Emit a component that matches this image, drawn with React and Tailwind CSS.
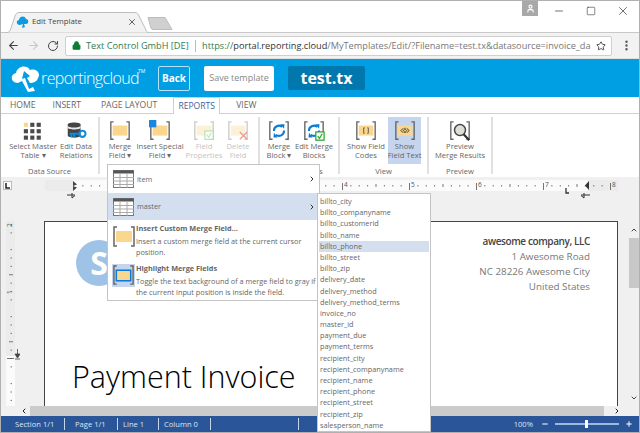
import React from "react";
import { ArrowLeft, ArrowRight, RotateCw, Lock, Star, EllipsisVertical, Minus, Square, X, ChevronLeft, ChevronRight, ChevronUp, ChevronDown, Plus, User } from "lucide-react";

const Brackets = ({ c = "#666", o = 1 }) => (
  <g opacity={o} fill="none" stroke={c} strokeWidth="1.5">
    <path d="M5 2H2V21H5" />
    <path d="M19 2H22V21H19" />
  </g>
);
const FieldIcon = ({ faded, children, fill = "#fbd78e" }) => (
  <svg width="24" height="24" viewBox="0 0 24 24">
    <Brackets c={faded ? "#ccc" : "#666"} />
    <rect x="4" y="6" width="16" height="11" fill={faded ? "#fdf0d8" : fill} />
    {children}
  </svg>
);
const GridIcon = () => (
  <svg width="24" height="24" viewBox="0 0 24 24">
    {[3, 10, 17].map((y) =>
      [2, 9, 16].map((x) => (
        <rect key={x + "-" + y} x={x} y={y} width="4.5" height="4.5" fill={x === 2 && y === 3 ? "#fbd78e" : "#4a4a4a"} />
      ))
    )}
  </svg>
);
const DbIcon = () => (
  <svg width="24" height="24" viewBox="0 0 24 24">
    <path d="M3 5C3 2 17 2 17 5V17C17 20 3 20 3 17Z" fill="#444" />
    <path d="M3 6C3 9 17 9 17 6V8.5C17 11 3 11 3 8.5Z" fill="#e8e8e8" />
    <circle cx="19" cy="15" r="3.4" fill="none" stroke="#0d8bdc" strokeWidth="2.2" />
    <path d="M15.5 15H5M7 15V18.5M10 15V18.5" fill="none" stroke="#0d8bdc" strokeWidth="2" />
  </svg>
);
const LoopIcon = ({ check }) => (
  <svg width="24" height="24" viewBox="0 0 24 24">
    <Brackets />
    <path d="M6.5 12A5.5 5.5 0 0 1 15.5 7.5M17.5 11.5A5.5 5.5 0 0 1 8.5 16" fill="none" stroke="#0a7bd6" strokeWidth="2.2" />
    <path d="M13.5 4.5L18 4.5L17.5 9.5Z M10.5 19L6 19L6.5 14Z" fill="#0a7bd6" />
    {check && (
      <g>
        <rect x="14" y="13" width="9" height="9" fill="#fff" stroke="#2eaa2e" strokeWidth="1.4" />
        <path d="M16 17.5L18 20L21 15" fill="none" stroke="#2eaa2e" strokeWidth="1.4" />
      </g>
    )}
  </svg>
);
const TableIcon = () => (
  <svg width="21" height="18" viewBox="0 0 21 18" className="shrink-0">
    <rect x="0.5" y="0.5" width="20" height="17" fill="#fff" stroke="#777" />
    <rect x="0.5" y="0.5" width="20" height="3" fill="#555" />
    <path d="M7 3V18M14 3V18M0 7.5H21M0 11H21M0 14.5H21" stroke="#aaa" fill="none" />
  </svg>
);

const RBtn = ({ w, top, bottom, faded, active, children }) => (
  <div
    className={`flex flex-col items-center shrink-0 pt-[3px] h-[47px] ${active ? "bg-[#c5d5ee]" : ""} ${faded ? "text-[#c4c4c4]" : "text-[#666]"}`}
    style={{ width: w }}
  >
    <div className="h-[22px] w-[22px] [&>svg]:w-[22px] [&>svg]:h-[22px]">{children}</div>
    <div className="leading-[8.5px] whitespace-nowrap text-center">{top}</div>
    <div className="leading-[8.5px] whitespace-nowrap text-center">{bottom}</div>
  </div>
);
const Group = ({ w, pl, label, children }) => (
  <div className="flex flex-col shrink-0 border-r-2 border-[#e0e0e0] h-[57px] mt-[3px]" style={{ width: w, paddingLeft: pl }}>
    <div className="flex h-[47px]">{children}</div>
    <div className="text-center text-[#666] leading-[10px] mt-[2px]" style={{ marginLeft: -pl }}>{label}</div>
  </div>
);

const rows = ["billto_city","billto_companyname","billto_customerid","billto_name","billto_phone","billto_street","billto_zip","delivery_date","delivery_method","delivery_method_terms","invoice_no","master_id","payment_due","payment_terms","recipient_city","recipient_companyname","recipient_name","recipient_phone","recipient_street","recipient_zip","salesperson_name"];

const HRuler = () => {
  const ticks = [];
  for (let i = 0; i < 68; i++) {
    const x = 29 + i * 8.375;
    if (i % 8 !== 0 && x < 572) ticks.push(<rect key={i} x={x} y={i % 4 === 0 ? 4 : 5} width={1} height={i % 4 === 0 ? 3 : 1.5} fill="#777" />);
  }
  const nums = [4, 5, 6, 7, 8];
  return (
    <svg width="573" height="24" viewBox="0 0 573 24" className="block">
      <rect x="0" y="0" width="573" height="11" fill="#fbfbfb" />
      <rect x="0" y="0" width="28" height="11" fill="#ebebeb" />
      <rect x="543" y="0" width="30" height="11" fill="#ebebeb" />
      {ticks}
      {nums.map((n) => (
        <g key={n}>
          <rect x={29 + n * 67} y="3" width="0.8" height="7" fill="#555" />
          <text x={31 + n * 67} y="7" fontSize="6.5" fill="#555">{n}</text>
        </g>
      ))}
      <path d="M28 1L32 4.5L28 6ZM28 6L32 7.5L28 11Z" fill="#444" />
      <path d="M22 15H30M27 13V18L30 15.5" stroke="#333" fill="none" />
      <path d="M544 1L540 5.5L544 10Z" fill="#333" />
      <path d="M521 8V13H524" stroke="#333" fill="none" strokeWidth="1.3" />
      <path d="M536 15H545M539 13V18L536 15.5" stroke="#333" fill="none" />
    </svg>
  );
};
const VRuler = () => {
  const ticks = [];
  for (let i = 0; i < 24; i++) {
    const y = 3 + i * 8.375;
    if (i % 8 !== 2) ticks.push(<rect key={i} x={i % 4 === 2 ? 7 : 8.5} y={y} width={i % 4 === 2 ? 4 : 1.5} height="1" fill="#777" />);
  }
  return (
    <svg width="18" height="185" viewBox="0 0 18 185" className="block">
      <rect x="4" y="0" width="9" height="135" fill="#ebebeb" />
      <rect x="4" y="135" width="9" height="50" fill="#fbfbfb" />
      {ticks}
      <text x="8" y="8" fontSize="6.5" fill="#555" transform="rotate(-90 8 6)">2</text>
      <text x="8" y="75" fontSize="6.5" fill="#555" transform="rotate(-90 8 73)">1</text>
      <rect x="5" y="137" width="7" height="0.8" fill="#555" />
      <path d="M13 133H18L15.5 137ZM15.5 128V133M13 138H18" stroke="#444" fill="#444" strokeWidth="0.8" />
    </svg>
  );
};

export default function App() {
  return (
    <div
      className="relative w-[640px] h-[433px] overflow-hidden flex flex-col bg-white border-x border-y border-[#b0b0b0] box-border"
      style={{ fontFamily: '"Open Sans","Noto Sans",sans-serif' }}
    >
      {/* title bar */}
      <div className="flex items-end h-[32px] shrink-0 pl-[4px] border-b border-[#c8c8c8] relative">
        <div className="relative w-[144px] h-[20px] flex items-center pl-[27px] pr-[12px] text-[7.8px] text-[#444]">
          <svg width="144" height="21" viewBox="0 0 144 21" className="absolute left-0 top-0">
            <path d="M0 20.5H2C4 20.5 5 19 6 16L10 4C11 1.5 12 .5 14 .5H130C132 .5 133 1.5 134 4L140 16C141 19 142 20.5 144 20.5" fill="#f2f2f2" stroke="#bdbdbd" />
          </svg>
          <svg width="13" height="13" viewBox="0 0 13 13" className="absolute left-[11px] top-[3px]">
            <path d="M4 10C0 10 0 5 3 5C3 1 9 0 10 4C13 4 13 9 10 9L8 9L9 12L6 13L7 9Z" fill="#0d9be0" />
          </svg>
          <span className="relative">Edit Template</span>
          <X size={10} strokeWidth={2} className="relative ml-auto text-[#444]" />
        </div>
        <svg width="26" height="13" viewBox="0 0 26 13" className="mb-[2px] -ml-[2px] shrink-0">
          <path d="M1 .5H18L25 12.5H6C5 12.5 4.5 12 4 11Z" fill="#d0d0d0" stroke="#bbb" />
        </svg>
        <div className="ml-auto flex items-start self-start">
          <div className="w-[16px] h-[15px] bg-[#a8a8a8] flex items-center justify-center">
            <User size={9} strokeWidth={3} className="text-white" />
          </div>
          <Minus size={12} strokeWidth={1.4} className="ml-[15px] mt-[4px] text-[#333]" />
          <Square size={10} strokeWidth={1.4} className="ml-[21px] mt-[5px] text-[#333]" />
          <X size={14} strokeWidth={1.2} className="ml-[20px] mt-[3px] mr-[9px] text-[#333]" />
        </div>
      </div>
      {/* toolbar */}
      <div className="flex items-center h-[26px] shrink-0 bg-[#f2f2f2] pl-[6px] border-b border-[#e0e0e0]">
        <ArrowLeft size={13} strokeWidth={2} className="text-[#444]" />
        <ArrowRight size={13} strokeWidth={2} className="text-[#c8c8c8] ml-[7px]" />
        <RotateCw size={12} strokeWidth={2} className="text-[#444] ml-[7px]" />
        <div className="ml-[6px] w-[547px] h-[20px] bg-white border border-[#cfcfcf] rounded-[2px] flex items-center pl-[6px] text-[9.2px] whitespace-nowrap overflow-hidden">
          <Lock size={9} strokeWidth={3} className="text-[#0b7a33] mr-[5px] shrink-0" fill="#0b7a33" />
          <span className="text-[#2f7d4f] w-[103px] shrink-0">Text Control GmbH [DE]</span>
          <span className="w-px h-[12px] bg-[#bbb] mx-[6px] shrink-0" />
          <span className="text-[#2f7d4f]">https://</span>
          <span className="text-[#333]">portal.reporting.cloud</span>
          <span className="text-[#777] flex-1 min-w-0">/MyTemplates/Edit/?Filename=test.tx&amp;datasource=invoice_da</span>
          <Star size={10} strokeWidth={2} className="text-[#333] ml-[4px] mr-[5px] shrink-0" />
        </div>
        <EllipsisVertical size={13} strokeWidth={2.5} className="text-[#555] ml-[8px]" />
      </div>
      {/* header */}
      <div className="flex items-center h-[38px] shrink-0 bg-[#009ee3] pl-[10px] text-white">
        <svg width="30" height="27" viewBox="0 0 30 27" className="shrink-0">
          <path d="M7 18C-1 18 -1 9 5 8C6 1 16 -1 19 5C26 3 30 9 27 13C26 17 22 18 19 18L16 13L19 11L13 6L11 14L14 13L18 24L22 22L24 26L17 27L11 16Z" fill="#fff" />
        </svg>
        <span className="text-[16px] font-light tracking-[-0.6px] leading-none w-[97px] whitespace-nowrap">reportingcloud</span>
        <span className="text-[5px] self-start mt-[9px] w-[10px]">TM</span>
        <div className="ml-[10px] w-[32px] h-[25px] border border-[#b5e2f7] rounded-[2px] flex items-center justify-center text-[10px] font-bold">Back</div>
        <div className="ml-[14px] w-[70px] h-[25px] bg-white rounded-[2px] flex items-center justify-center text-[9px] text-[#888] whitespace-nowrap">Save template</div>
        <div className="ml-[14px] w-[77px] h-[24px] bg-[#0077ad] rounded-[2px] flex items-center justify-center text-[16px] font-bold">test.tx</div>
      </div>
      {/* ribbon tabs */}
      <div className="flex items-end h-[17px] shrink-0 text-[8.6px] text-[#666] border-b border-[#d0d0d0]">
        <span className="ml-[9px] h-[16px] leading-[16px]">HOME</span>
        <span className="ml-[17px] h-[16px] leading-[16px]">INSERT</span>
        <span className="ml-[20px] h-[16px] leading-[16px]">PAGE LAYOUT</span>
        <span className="ml-[16px] h-[17px] w-[47px] text-center leading-[16px] border border-b-0 border-[#cfcfcf] bg-white text-[#4a5a9a] -mb-px">REPORTS</span>
        <span className="ml-[16px] h-[16px] leading-[16px]">VIEW</span>
      </div>
      {/* ribbon */}
      <div className="flex h-[63px] shrink-0 bg-white text-[7.6px]">
        <Group w={99} pl={9} label="Data Source">
          <RBtn w={46} top="Select Master" bottom="Table ▾"><GridIcon /></RBtn>
          <RBtn w={40} top="Edit Data" bottom="Relations"><DbIcon /></RBtn>
        </Group>
        <Group w={160} pl={4} label="">
          <RBtn w={32} top="Merge" bottom="Field ▾"><FieldIcon /></RBtn>
          <RBtn w={48} top="Insert Special" bottom="Field ▾">
            <FieldIcon>
              <rect x="0" y="0" width="8" height="8" fill="#1a86e0" />
            </FieldIcon>
          </RBtn>
          <div className="w-px" />
          <RBtn w={38} faded top="Field" bottom="Properties">
            <FieldIcon faded>
              <rect x="13" y="12" width="9" height="9" fill="#fff" stroke="#9fdc9f" />
              <path d="M15 16L17 19L20 14" stroke="#9fdc9f" fill="none" />
            </FieldIcon>
          </RBtn>
          <RBtn w={30} faded top="Delete" bottom="Field">
            <FieldIcon faded>
              <path d="M14 13L22 21M22 13L14 21" stroke="#e8a090" strokeWidth="1.5" />
            </FieldIcon>
          </RBtn>
        </Group>
        <Group w={80} pl={2} label="Merge Blocks">
          <RBtn w={34} top="Merge" bottom="Block ▾"><LoopIcon /></RBtn>
          <RBtn w={36} top="Edit Merge" bottom="Blocks"><LoopIcon check /></RBtn>
        </Group>
        <Group w={89} pl={4} label="View">
          <RBtn w={44} top="Show Field" bottom="Codes">
            <FieldIcon>
              <path d="M10.5 8.5H9.5V14.5H10.5M13.5 8.5H14.5V14.5H13.5" stroke="#444" fill="none" strokeWidth="0.9" />
            </FieldIcon>
          </RBtn>
          <RBtn w={33} active top="Show" bottom="Field Text">
            <FieldIcon>
              <path d="M10 9L7.5 11.5L10 14M12.5 9L10 11.5L12.5 14M11.5 9L14 11.5L11.5 14M14 9L16.5 11.5L14 14" stroke="#333" fill="none" strokeWidth="1" />
            </FieldIcon>
          </RBtn>
        </Group>
        <Group w={64} pl={4} label="Preview">
          <RBtn w={54} top="Preview" bottom="Merge Results">
            <svg width="24" height="24" viewBox="0 0 24 24">
              <Brackets />
              <rect x="6" y="7" width="12" height="8" fill="#fbd78e" />
              <circle cx="12" cy="11" r="6" fill="#cfe3f5" fillOpacity="0.7" stroke="#444" strokeWidth="1.6" />
              <path d="M16 15.5L22 22" stroke="#333" strokeWidth="2.4" />
            </svg>
          </RBtn>
        </Group>
        <div className="flex-1 bg-white" />
      </div>
      {/* workspace */}
      <div className="flex-1 min-h-0 flex flex-col bg-[#f0f0f0]">
        <div className="flex h-[44px] shrink-0 pt-[3px]">
          <div className="ml-[2px] w-[9px] h-[9px] bg-white border border-[#bbb] flex items-center justify-center mt-px">
            <svg width="5" height="6" viewBox="0 0 5 6"><path d="M1 0V5H5" stroke="#222" strokeWidth="1.5" fill="none" /></svg>
          </div>
          <div className="ml-[33px]"><HRuler /></div>
        </div>
        <div className="flex flex-1 min-h-0">
          <div className="w-[43px] shrink-0 pl-[1px]"><VRuler /></div>
          <div className="w-[574px] shrink-0 bg-white border-x border-t border-[#444] flex flex-col overflow-hidden relative pt-[12px] pr-[27px] text-[#777]">
            <div className="absolute left-[31px] top-[18px] w-[46px] h-[46px] rounded-full bg-[#9fc3e6] flex items-center justify-center text-white font-bold text-[32px] leading-none">S</div>
            <div className="text-right text-[9.8px] leading-[15px]">
              <div className="font-semibold text-[#444] text-[10px] tracking-[-0.4px]">awesome company, LLC</div>
              <div>1 Awesome Road</div>
              <div>NC 28226 Awesome City</div>
              <div>United States</div>
            </div>
            <div className="pl-[27px] mt-[62px] text-[30.5px] leading-[40px] text-black font-light whitespace-nowrap">Payment Invoice</div>
          </div>
          <div className="w-[10px] shrink-0" />
          <div className="flex-1 flex flex-col items-center bg-[#f0f0f0] pt-[5px]">
            <ChevronUp size={8} strokeWidth={3} className="text-[#444] mb-[4px]" />
            <div className="w-[10px] h-[50px] bg-[#c8c8c8]" />
            <div className="flex-1" />
            <ChevronDown size={8} strokeWidth={3} className="text-[#444] mb-[4px]" />
          </div>
        </div>
        <div className="flex h-[10px] shrink-0">
          <div className="w-[29px] shrink-0 bg-[#f0f0f0] flex items-center justify-end pr-[2px]">
            <ChevronLeft size={8} strokeWidth={3} className="text-[#222]" />
          </div>
          <div className="w-[574px] bg-[#cbcbcb]" />
          <div className="flex-1 bg-[#f0f0f0] flex items-center justify-center pr-[10px]">
            <ChevronRight size={8} strokeWidth={3} className="text-[#222]" />
          </div>
        </div>
      </div>
      {/* status */}
      <div className="flex items-center h-[16px] shrink-0 bg-[#2a5699] text-[#dbe5f3] text-[7.6px]">
        <span className="w-[63px] pl-[14px] leading-[16px] whitespace-nowrap">Section 1/1</span>
        <span className="w-px h-[12px] bg-[#c8d6ea]" />
        <span className="w-[52px] pl-[10px] leading-[16px] whitespace-nowrap">Page 1/1</span>
        <span className="w-px h-[12px] bg-[#c8d6ea]" />
        <span className="w-[40px] pl-[5px] leading-[16px] whitespace-nowrap">Line 1</span>
        <span className="w-px h-[12px] bg-[#c8d6ea]" />
        <span className="w-[51px] pl-[5px] leading-[16px] whitespace-nowrap">Column 0</span>
        <span className="w-px h-[12px] bg-[#c8d6ea]" />
        <span className="w-[87px]" />
        <span className="w-px h-[12px] bg-[#c8d6ea]" />
        <span className="ml-auto leading-[16px]">100%</span>
        <Minus size={8} strokeWidth={3} className="ml-[8px] text-white" />
        <div className="ml-[6px] w-[64px] h-[2px] bg-[#9db8dc] relative">
          <div className="absolute left-[30px] -top-[3px] w-[3px] h-[8px] bg-white" />
        </div>
        <Plus size={8} strokeWidth={3} className="ml-[6px] mr-[6px] text-white" />
      </div>

      {/* merge field menu */}
      <div className="absolute left-[106px] top-[163px] w-[213px] h-[137px] bg-white border border-[#c4c4c4] text-[7.3px] text-[#666]">
        <div className="flex items-center h-[28px] pl-[5px] pr-[3px]">
          <TableIcon /><span className="ml-[3px]">item</span>
          <ChevronRight size={8} strokeWidth={3} className="ml-auto text-[#333]" />
        </div>
        <div className="flex items-center h-[27px] pl-[5px] pr-[3px] bg-[#d3dfef]">
          <TableIcon /><span className="ml-[3px]">master</span>
          <ChevronRight size={8} strokeWidth={3} className="ml-auto text-[#333]" />
        </div>
        <div className="flex h-[38px] pl-[4px] pt-[3px]">
          <div className="w-[24px] h-[24px] shrink-0 mt-[2px]"><FieldIcon /></div>
          <div className="leading-[11.5px]">
            <div className="font-bold">Insert Custom Merge Field...</div>
            <div className="mt-[1px]">Insert a custom merge field at the current cursor position.</div>
          </div>
        </div>
        <div className="flex pl-[4px]">
          <div className="w-[23px] h-[23px] shrink-0 mt-[6px] bg-[#c5d5ee]">
            <svg width="23" height="23" viewBox="0 0 24 24">
              <Brackets />
              <rect x="4.5" y="6.5" width="15" height="11" fill="#fbd78e" stroke="#0a7be0" strokeWidth="1.6" />
            </svg>
          </div>
          <div className="ml-[1px] leading-[11.5px] pt-[5px]">
            <div className="font-bold">Highlight Merge Fields</div>
            <div className="mt-[1px]">Toggle the text background of a merge field to gray if the current input position is inside the field.</div>
          </div>
        </div>
      </div>
      {/* sub menu */}
      <div className="absolute left-[316px] top-[192px] w-[114px] bg-white border border-[#c4c4c4] pt-[2px] pl-[1px] pr-[1px] text-[7.3px] text-[#666]">
        {rows.map((r) => (
          <div key={r} className={`h-[11.2px] leading-[11.2px] pl-[1px] whitespace-nowrap ${r === "billto_phone" ? "bg-[#d3dfef]" : ""}`}>{r}</div>
        ))}
      </div>
    </div>
  );
}
